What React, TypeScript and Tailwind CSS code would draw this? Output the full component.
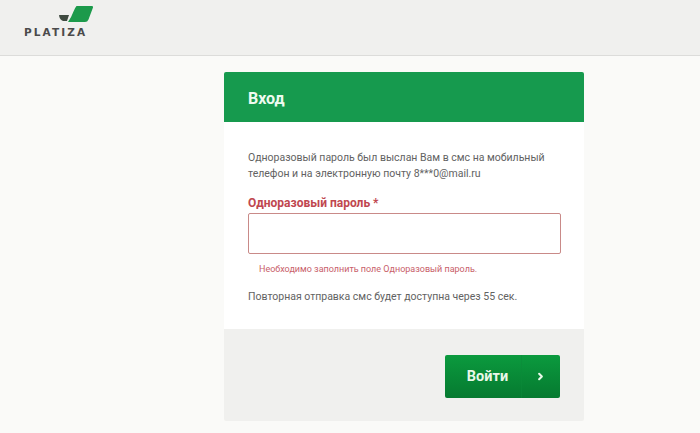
import { ChevronRight } from 'lucide-react'

function Logo() {
  return (
    <div className="flex w-[70px] flex-col items-start">
      <svg width="70" height="18" viewBox="0 0 70 18" className="block">
        <path d="M35 10.500 Q35 10 35.500 10 L45 10 L43 16 L39 16 Q36 15 35 10.500 Z" fill="#3f4a40" />
        <path d="M52.500 1 L68 1 Q69.500 1 69 2.500 L64.500 14.500 Q63.500 17 61 17 L44 17 Q47.500 12 49.500 6.500 Q50.800 3 52.500 1 Z" fill="#1c9a4b" />
      </svg>
      <div className="mt-[4px] font-['DejaVu_Sans','Liberation_Sans',sans-serif] text-[10.5px] leading-[11px] font-bold tracking-[2.1px] text-[#4b4b4b]">
        PLATIZA
      </div>
    </div>
  )
}

export default function App() {
  return (
    <div className="h-[433px] w-[700px] overflow-hidden bg-[#fafaf8] font-['Roboto','Liberation_Sans',sans-serif]">
      <header className="flex h-[56px] items-start border-b border-[#dcdcda] bg-[#f0f0ee] pt-[5px] pl-[24px]">
        <Logo />
      </header>

      <main className="mt-[16px] ml-[224px] w-[360px]">
        <div className="flex h-[50px] items-center rounded-t-[2px] bg-[#169a4e] pt-[3px] pl-[24px] text-[16px] font-bold text-[#eefbf0]">
          Вход
        </div>

        <div className="h-[207px] bg-white px-[24px] pt-[28px]">
          <p className="text-[10.5px] leading-[16px] text-[#626262]">
            Одноразовый пароль был выслан Вам в смс на мобильный
            <br />
            телефон и на электронную почту 8***0@mail.ru
          </p>
          <label className="mt-[13px] block text-[12px] leading-[17px] font-bold text-[#c0474f]">
            Одноразовый пароль *
          </label>
          <input
            type="text"
            className="mt-[1px] block h-[41px] w-[313px] rounded-[2px] border border-[#c98a88] bg-white outline-none"
          />
          <div className="mt-[8px] ml-[11px] text-[9px] leading-[14px] text-[#c8606a]">
            Необходимо заполнить поле Одноразовый пароль.
          </div>
          <p className="mt-[14px] text-[10.5px] leading-[14px] text-[#626262]">
            Повторная отправка смс будет доступна через 55 сек.
          </p>
        </div>

        <div className="flex h-[92px] items-start justify-end rounded-b-[2px] bg-[#f0f0ee] pt-[26px] pr-[24px]">
          <button
            type="button"
            className="flex h-[43px] w-[115px] items-center rounded-[2px] bg-gradient-to-b from-[#0b9a3e] to-[#067a30] text-[#e9f8e9]"
          >
            <span className="flex h-full w-[76px] items-center justify-center pl-[9px] text-[14.5px] font-bold">Войти</span>
            <span className="flex h-full flex-1 items-center justify-center border-l border-[#0c8a3a]/50 pr-[1px]">
              <ChevronRight className="h-[11px] w-[11px]" strokeWidth={4.5} />
            </span>
          </button>
        </div>
      </main>
    </div>
  )
}
